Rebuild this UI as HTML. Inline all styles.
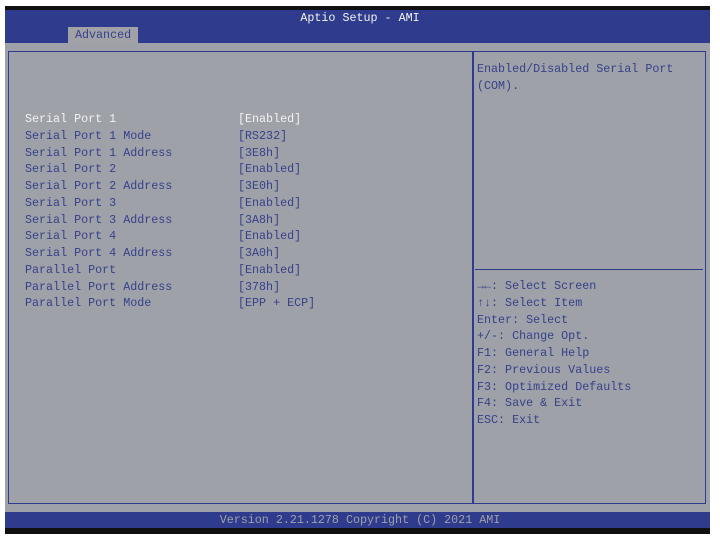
<!DOCTYPE html>
<html><head><style>
body{margin:0;width:720px;height:545px;background:#fff;position:relative;overflow:hidden;font-family:"Liberation Mono",monospace;font-size:11.7px;}
div{position:absolute;}
.t{white-space:pre;line-height:16.75px;color:#36418a;}
</style></head><body>
<div style="left:5px;top:6px;width:705px;height:4px;background:#111"></div>
<div style="left:5px;top:10px;width:705px;height:33px;background:#2f3b8d"></div>
<div class="t" style="left:0;width:720px;top:10px;text-align:center;color:#f2f2f2">Aptio Setup - AMI</div>
<div style="left:68px;top:27px;width:70px;height:16px;background:#a0a2a8"></div>
<div class="t" style="left:75px;top:27px;color:#36418a">Advanced</div>
<div style="left:5px;top:43px;width:705px;height:469px;background:#9fa1a8"></div>
<div style="left:8px;top:51px;width:696px;height:451px;border:1.5px solid #2f3b8d"></div>
<div style="left:472px;top:51px;width:1.5px;height:453px;background:#2f3b8d"></div>
<div style="left:475px;top:269px;width:228px;height:1px;background:#2f3b8d"></div>
<div class="t" style="left:25px;top:111px"><span style="color:#f2f2f2">Serial Port 1</span>
Serial Port 1 Mode
Serial Port 1 Address
Serial Port 2
Serial Port 2 Address
Serial Port 3
Serial Port 3 Address
Serial Port 4
Serial Port 4 Address
Parallel Port
Parallel Port Address
Parallel Port Mode</div>
<div class="t" style="left:238px;top:111px"><span style="color:#f2f2f2">[Enabled]</span>
[RS232]
[3E8h]
[Enabled]
[3E0h]
[Enabled]
[3A8h]
[Enabled]
[3A0h]
[Enabled]
[378h]
[EPP + ECP]</div>
<div class="t" style="left:477px;top:61px">Enabled/Disabled Serial Port
(COM).</div>
<div class="t" style="left:477px;top:278px">→←: Select Screen
↑↓: Select Item
Enter: Select
+/-: Change Opt.
F1: General Help
F2: Previous Values
F3: Optimized Defaults
F4: Save &amp; Exit
ESC: Exit</div>
<div style="left:5px;top:512px;width:705px;height:16px;background:#2f3b8d"></div>
<div class="t" style="left:0;width:720px;top:512px;text-align:center;color:#9fa1a8">Version 2.21.1278 Copyright (C) 2021 AMI</div>
<div style="left:5px;top:528px;width:705px;height:6px;background:#111"></div>
</body></html>
